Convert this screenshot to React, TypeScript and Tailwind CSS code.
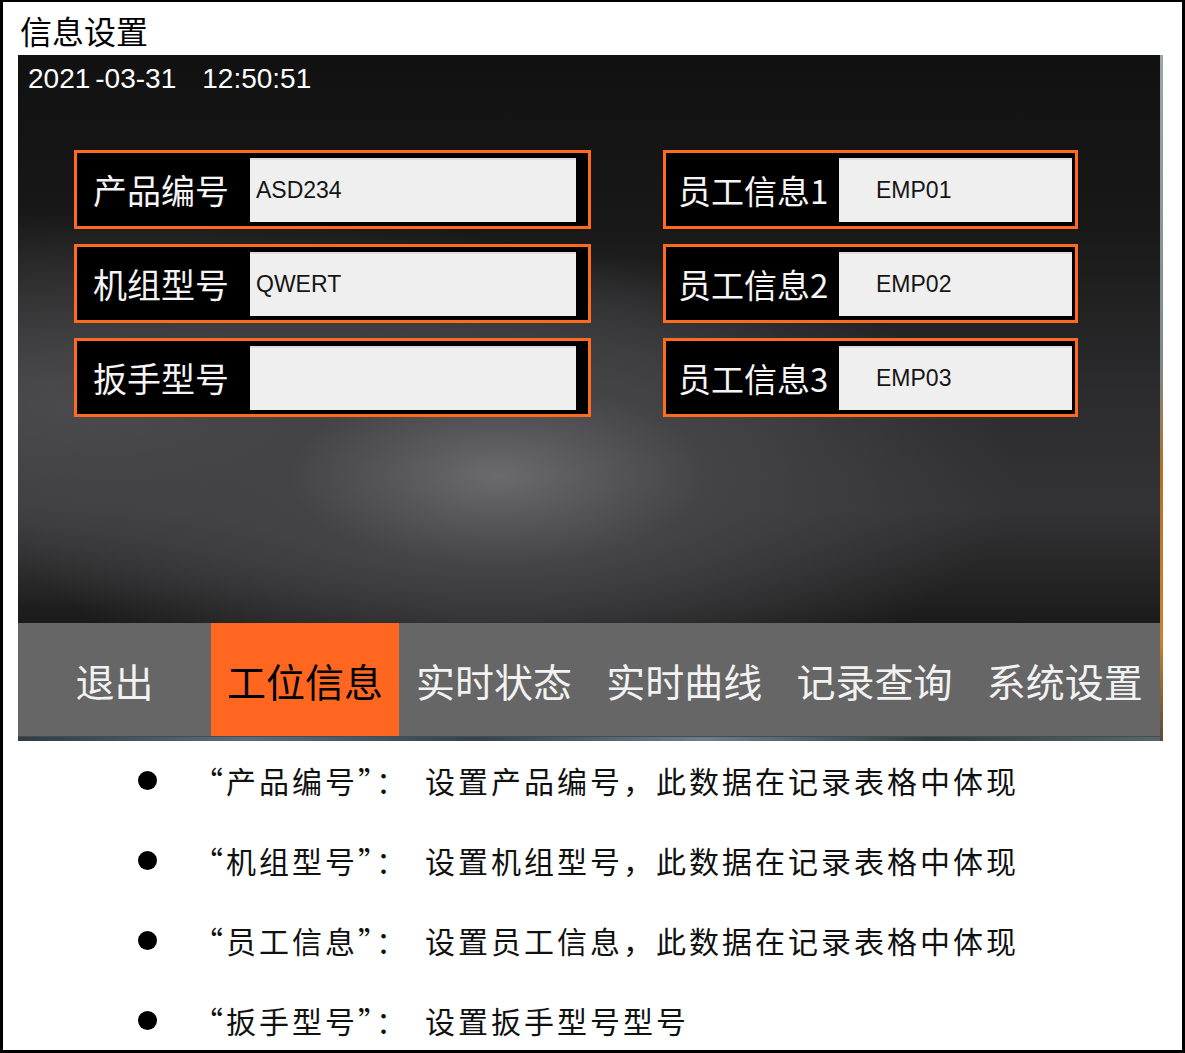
import React from "react";

const leftFields = [
  { label: "产品编号", value: "ASD234" },
  { label: "机组型号", value: "QWERT" },
  { label: "扳手型号", value: "" },
];

const rightFields = [
  { label: "员工信息1", value: "EMP01" },
  { label: "员工信息2", value: "EMP02" },
  { label: "员工信息3", value: "EMP03" },
];

const tabs = ["实时状态", "实时曲线", "记录查询", "系统设置"];

const notes = [
  { head: "“产品编号”：", text: "设置产品编号，此数据在记录表格中体现" },
  { head: "“机组型号”：", text: "设置机组型号，此数据在记录表格中体现" },
  { head: "“员工信息”：", text: "设置员工信息，此数据在记录表格中体现" },
  { head: "“扳手型号”：", text: "设置扳手型号型号" },
];

const App = () => {
  return (
    <div className="w-[1185px] h-[1053px] overflow-hidden bg-white border-black border-t-2 border-l-[3px] border-r-[3px] border-b-[3px] font-['Noto_Sans_CJK_SC',sans-serif]">
      <div className="pl-[17px] pt-[8px] text-[32px] leading-[40px] text-black">信息设置</div>

      <div className="mt-[5px] ml-[15px] flex">
        <div className="w-[1142px] h-[686px] flex flex-col">
          {/* screen area */}
          <div className="h-[568px] pl-[10px] pt-[8px] bg-[#151515] bg-[image:radial-gradient(ellipse_520px_230px_at_42%_74%,#6a6a6f_0%,#444447_40%,rgba(40,40,40,0)_100%),radial-gradient(ellipse_700px_200px_at_10%_62%,rgba(84,84,86,0.85)_0%,rgba(30,30,30,0)_100%),linear-gradient(to_bottom,#111111_0%,#181818_30%,#2c2c2e_60%,#333335_80%,#1b1b1b_100%)]">
            <div className="text-[28px] leading-[32px] text-white font-['Liberation_Sans',sans-serif]">
              <span>2021</span>
              <span className="ml-[5px]">-03-31</span>
              <span className="ml-[26px]">12:50:51</span>
            </div>

            <div className="mt-[55px] ml-[46px] flex gap-[72px]">
              <div className="w-[517px] flex flex-col gap-[15px]">
                {leftFields.map((f) => (
                  <div key={f.label} className="h-[79px] border-[3px] border-[#ff6a1f] bg-black flex items-center">
                    <span className="pl-[16px] text-[34px] leading-[40px] text-[#f5f5f5]">{f.label}</span>
                    <div className="ml-auto mr-[12px] w-[326px] h-[64px] bg-[#efefef] border-t-2 border-[#dcdcdc] flex items-center pl-[6px] text-[23px] text-[#151515] font-['Liberation_Sans',sans-serif]">
                      {f.value}
                    </div>
                  </div>
                ))}
              </div>
              <div className="w-[415px] flex flex-col gap-[15px]">
                {rightFields.map((f) => (
                  <div key={f.label} className="h-[79px] border-[3px] border-[#ff6a1f] bg-black flex items-center">
                    <span className="pl-[12px] text-[33px] leading-[40px] text-[#f5f5f5]">{f.label}</span>
                    <div className="ml-auto mr-[3px] w-[233px] h-[64px] bg-[#efefef] border-t-2 border-[#dcdcdc] flex items-center pl-[37px] text-[23px] text-[#151515] font-['Liberation_Sans',sans-serif]">
                      {f.value}
                    </div>
                  </div>
                ))}
              </div>
            </div>
          </div>

          {/* bottom nav */}
          <div className="h-[114px] bg-[#666666] border-b border-[#4a4a4a] flex text-[39px] leading-[44px]">
            <div className="w-[193px] flex items-center justify-center text-[#f2f2f2]">退出</div>
            <div className="w-[188px] flex items-center justify-center bg-[#ff6720] text-black">工位信息</div>
            {tabs.map((t) => (
              <div key={t} className="flex-1 flex items-center justify-center text-[#f2f2f2]">
                {t}
              </div>
            ))}
          </div>
          <div className="h-[4px] bg-[linear-gradient(to_right,#2d3c46,#5a6e7a,#33424c,#6c7f8a,#2f3d46,#56666f)]" />
        </div>
        <div className="w-[3px] h-[686px] bg-[linear-gradient(to_bottom,#9aa6a8_0%,#7d8a8a_45%,#b0702a_60%,#c88430_85%,#5a4a3a_100%)]" />
      </div>

      {/* notes */}
      <ul className="mt-[19px] flex flex-col gap-[40px]">
        {notes.map((n) => (
          <li key={n.head} className="flex items-center h-[40px] text-[30px] leading-[40px] tracking-[3px] text-[#111]">
            <span className="ml-[135px] w-[19px] h-[19px] rounded-full bg-black" />
            <span className="ml-[36px]">{n.head}</span>
            <span className="ml-[16px]">{n.text}</span>
          </li>
        ))}
      </ul>
    </div>
  );
};

export default App;
